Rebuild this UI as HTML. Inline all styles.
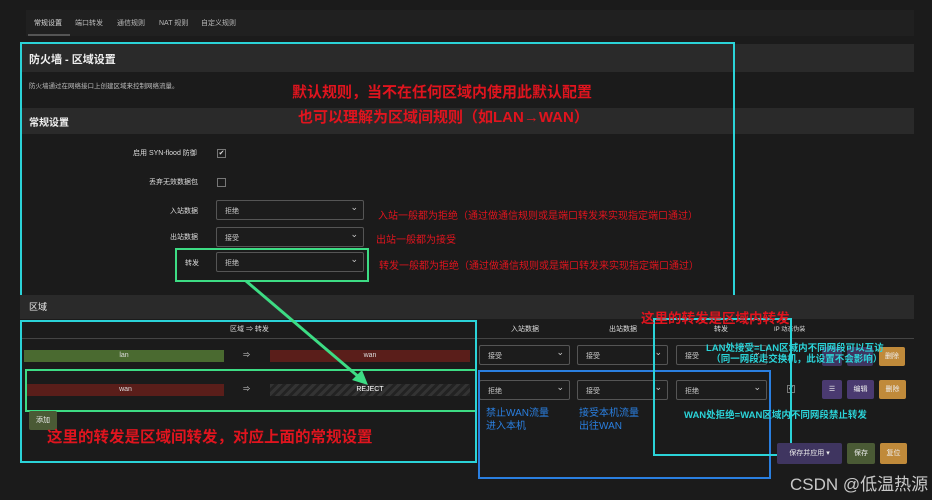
<!DOCTYPE html>
<html><head><meta charset="utf-8"><style>
*{margin:0;padding:0;box-sizing:border-box}
body{width:932px;height:500px;background:#1b1b1b;position:relative;overflow:hidden;font-family:"Liberation Sans","Noto Sans CJK SC",sans-serif;color:#ddd;font-size:8px}
.a{position:absolute}
.bar{position:absolute;background:#2a2a2a}
.sel{position:absolute;border:1px solid #555;background:#1c1c1c;border-radius:2px;height:20px;font-size:7px;color:#ccc;padding:5px 0 0 8px}
.sel:after{content:"⌄";position:absolute;right:5px;top:1px;font-size:9px;color:#ccc}
.btn{position:absolute;font-size:7px;color:#eee;text-align:center;border-radius:2px}
.red{color:#e0141e;font-weight:bold}
.cy{color:#2bd3d8;font-weight:bold}
.bl{color:#2a7fe0}
</style></head><body>
<div class="bar" style="left:26px;top:10px;width:888px;height:26px;background:#202020"></div>
<div class="a" style="left:34px;top:18px;font-size:7px;color:#ddd">常规设置</div>
<div class="a" style="left:28px;top:34px;width:42px;height:2px;background:#555"></div>
<div class="a" style="left:75px;top:18px;font-size:7px;color:#bbb">端口转发</div>
<div class="a" style="left:117px;top:18px;font-size:7px;color:#bbb">通信规则</div>
<div class="a" style="left:159px;top:18px;font-size:7px;color:#bbb">NAT 规则</div>
<div class="a" style="left:201px;top:18px;font-size:7px;color:#bbb">自定义规则</div>

<div class="bar" style="left:20px;top:44px;width:894px;height:28px"></div>
<div class="a" style="left:29px;top:51px;font-size:11px;font-weight:bold;color:#eee">防火墙 - 区域设置</div>
<div class="a" style="left:29px;top:80px;font-size:6.5px;color:#bbb">防火墙通过在网络接口上创建区域来控制网络流量。</div>
<div class="bar" style="left:20px;top:108px;width:894px;height:26px"></div>
<div class="a" style="left:29px;top:114px;font-size:10px;font-weight:bold;color:#eee">常规设置</div>
<div class="a red" style="left:292px;top:81px;font-size:15px">默认规则，当不在任何区域内使用此默认配置</div>
<div class="a red" style="left:298px;top:106px;font-size:15px">也可以理解为区域间规则（如LAN→WAN）</div>

<div class="a" style="left:133px;top:148px;font-size:7px">启用 SYN-flood 防御</div>
<div class="a" style="left:217px;top:149px;width:9px;height:9px;border:1px solid #777;font-size:7px;line-height:7px;text-align:center">✔</div>
<div class="a" style="left:149px;top:177px;font-size:7px">丢弃无效数据包</div>
<div class="a" style="left:217px;top:178px;width:9px;height:9px;border:1px solid #777"></div>
<div class="a" style="left:170px;top:206px;font-size:7px">入站数据</div>
<div class="sel" style="left:216px;top:200px;width:148px">拒绝</div>
<div class="a" style="left:170px;top:232px;font-size:7px">出站数据</div>
<div class="sel" style="left:216px;top:227px;width:148px">接受</div>
<div class="a" style="left:185px;top:258px;font-size:7px">转发</div>
<div class="sel" style="left:216px;top:252px;width:148px">拒绝</div>
<div class="a" style="left:175px;top:248px;width:194px;height:34px;border:2px solid #3ddc84"></div>
<div class="a" style="left:378px;top:207px;font-size:10px;color:#e0141e">入站一般都为拒绝（通过做通信规则或是端口转发来实现指定端口通过）</div>
<div class="a" style="left:376px;top:231px;font-size:10px;color:#e0141e">出站一般都为接受</div>
<div class="a" style="left:379px;top:257px;font-size:10px;color:#e0141e">转发一般都为拒绝（通过做通信规则或是端口转发来实现指定端口通过）</div>
<div class="a" style="left:20px;top:42px;width:715px;height:266px;border:2px solid #2bd3d8"></div>

<div class="bar" style="left:20px;top:295px;width:894px;height:24px"></div>
<div class="a" style="left:29px;top:300px;font-size:9px;color:#eee">区域</div>
<div class="a" style="left:230px;top:324px;font-size:7px">区域 ⇒ 转发</div>
<div class="a" style="left:22px;top:338px;width:892px;height:1px;background:#444"></div>
<div class="a" style="left:511px;top:324px;font-size:7px">入站数据</div>
<div class="a" style="left:609px;top:324px;font-size:7px">出站数据</div>
<div class="a" style="left:714px;top:324px;font-size:7px">转发</div>
<div class="a" style="left:774px;top:324px;font-size:6px">IP 动态伪装</div>

<div class="a" style="left:24px;top:350px;width:200px;height:12px;background:#4a6a30;font-size:7px;text-align:center;line-height:12px">lan</div>
<div class="a" style="left:243px;top:350px;font-size:7px">⇒</div>
<div class="a" style="left:270px;top:350px;width:200px;height:12px;background:#5a1e1a;font-size:7px;text-align:center;line-height:12px">wan</div>
<div class="a" style="left:27px;top:384px;width:197px;height:12px;background:#5a1e1a;font-size:7px;text-align:center;line-height:12px">wan</div>
<div class="a" style="left:243px;top:384px;font-size:7px">⇒</div>
<div class="a" style="left:270px;top:384px;width:200px;height:12px;background:repeating-linear-gradient(135deg,#333 0 3px,#222 3px 6px);font-size:7px;text-align:center;line-height:12px;color:#fff">REJECT</div>
<div class="a" style="left:25px;top:369px;width:452px;height:43px;border:2px solid #3ddc84"></div>
<div class="btn" style="left:29px;top:411px;width:28px;height:19px;background:#4a5a35;line-height:19px">添加</div>
<div class="a red" style="left:47px;top:425px;font-size:15.5px">这里的转发是区域间转发，对应上面的常规设置</div>
<div class="a" style="left:20px;top:320px;width:457px;height:143px;border:2px solid #2bd3d8"></div>

<div class="sel" style="left:479px;top:345px;width:91px">接受</div>
<div class="sel" style="left:577px;top:345px;width:91px">接受</div>
<div class="sel" style="left:676px;top:345px;width:91px">接受</div>
<div class="sel" style="left:479px;top:380px;width:91px">拒绝</div>
<div class="sel" style="left:577px;top:380px;width:91px">接受</div>
<div class="sel" style="left:676px;top:380px;width:91px">拒绝</div>
<div class="a" style="left:787px;top:385px;width:8px;height:8px;border:1px solid #777;font-size:6px;line-height:6px;text-align:center">✔</div>
<div class="btn" style="left:822px;top:347px;width:20px;height:19px;background:#3f3560"></div>
<div class="btn" style="left:847px;top:347px;width:26px;height:19px;background:#3f3560"></div>
<div class="btn" style="left:879px;top:347px;width:26px;height:19px;background:#c08a3a;line-height:19px">删除</div>
<div class="btn" style="left:822px;top:380px;width:20px;height:19px;background:#4a3a70;line-height:19px">☰</div>
<div class="btn" style="left:847px;top:380px;width:27px;height:19px;background:#4a3a70;line-height:19px">编辑</div>
<div class="btn" style="left:879px;top:380px;width:27px;height:19px;background:#c08a3a;line-height:19px">删除</div>

<div class="a" style="left:478px;top:370px;width:293px;height:109px;border:2px solid #2a7fe0"></div>
<div class="a" style="left:653px;top:318px;width:139px;height:138px;border:2px solid #2bd3d8"></div>
<div class="a red" style="left:641px;top:307px;font-size:13.5px">这里的转发是区域内转发</div>
<div class="a cy" style="left:706px;top:343px;font-size:9.5px;line-height:11px">LAN处接受=LAN区域内不同网段可以互访<br>&nbsp;&nbsp;（同一网段走交换机，此设置不会影响）</div>
<div class="a cy" style="left:684px;top:407px;font-size:9.5px">WAN处拒绝=WAN区域内不同网段禁止转发</div>
<div class="a bl" style="left:486px;top:407px;font-size:10px;line-height:13px">禁止WAN流量<br>进入本机</div>
<div class="a bl" style="left:579px;top:407px;font-size:10px;line-height:13px">接受本机流量<br>出往WAN</div>

<div class="btn" style="left:777px;top:443px;width:65px;height:21px;background:#3f3560;line-height:21px">保存并应用 ▾</div>
<div class="btn" style="left:847px;top:443px;width:28px;height:21px;background:#4a5a35;line-height:21px">保存</div>
<div class="btn" style="left:880px;top:443px;width:27px;height:21px;background:#c08a3a;line-height:21px">复位</div>
<div class="a" style="left:790px;top:470px;font-size:17px;color:#c8c8c8">CSDN @低温热源</div>

<svg class="a" style="left:0;top:0" width="932" height="500"><line x1="246" y1="281" x2="360" y2="378" stroke="#3ddc84" stroke-width="3"/><polygon points="368,385 352,380 362,370" fill="#3ddc84"/></svg>
</body></html>
